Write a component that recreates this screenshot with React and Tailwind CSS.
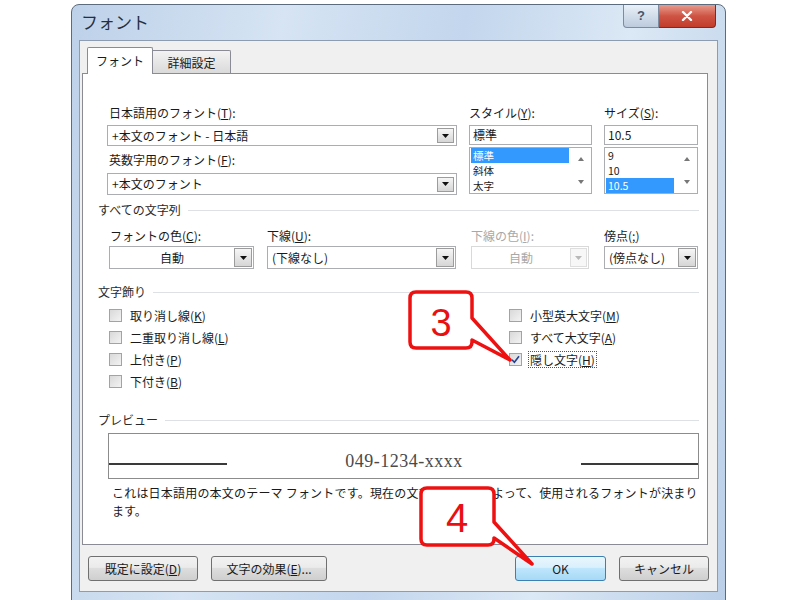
import React from 'react';

const JP = "font-['Noto_Sans_CJK_JP',sans-serif]";

function U({ children }) {
  return <span className="underline underline-offset-[1px]">{children}</span>;
}

function Label({ children, className = '' }) {
  return <div className={`text-[12px] leading-[14px] whitespace-nowrap ${className}`}>{children}</div>;
}

function Arrow({ disabled }) {
  return (
    <svg width="7" height="4" viewBox="0 0 7 4">
      <path d="M0 0h7L3.5 4z" fill={disabled ? '#b8b8b8' : '#111'} />
    </svg>
  );
}

function DropBtn({ disabled, className = '' }) {
  return (
    <div
      className={`flex items-center justify-center border ${
        disabled
          ? 'border-[#dedede] bg-[#f7f7f7]'
          : 'border-[#9c9c9c] bg-gradient-to-b from-[#f6f6f6] to-[#d6d6d6]'
      } ${className}`}
    >
      <Arrow disabled={disabled} />
    </div>
  );
}

function Combo({ className = '', text, center, disabled, btnClass = 'w-[17px] h-[15px] mr-[2px]' }) {
  return (
    <div
      className={`flex items-center bg-white border ${
        disabled ? 'border-[#d9d9d9] text-[#a8a8a8]' : 'border-[#abadb3]'
      } ${className}`}
    >
      <div className={`flex-1 text-[12px] leading-[14px] whitespace-nowrap ${center ? 'text-center' : 'pl-[4px]'}`}>
        {text}
      </div>
      <DropBtn disabled={disabled} className={btnClass} />
    </div>
  );
}

function ScrollArrows() {
  return (
    <div className="w-[20px] flex flex-col justify-between items-center py-[9px]">
      <svg width="6" height="4" viewBox="0 0 6 4"><path d="M0 4L3 0L6 4z" fill="#777" /></svg>
      <svg width="6" height="4" viewBox="0 0 6 4"><path d="M0 0h6L3 4z" fill="#777" /></svg>
    </div>
  );
}

function ListBox({ items, sel, className = '', selW }) {
  return (
    <div className={`flex border border-[#abadb3] bg-white ${className}`}>
      <div className="flex-1 pt-[0px] pl-[1px]">
        {items.map((it, i) => (
          <div
            key={i}
            className={`h-[15px] leading-[15px] text-[10.5px] pl-[2px] ${i === sel ? `bg-[#3399ff] text-white ${selW}` : ''}`}
          >
            {it}
          </div>
        ))}
      </div>
      <ScrollArrows />
    </div>
  );
}

function TextBox({ text, className = '' }) {
  return (
    <div className={`flex items-center bg-white border border-[#abadb3] pl-[3px] text-[12px] leading-[14px] ${className}`}>
      {text}
    </div>
  );
}

function Section({ title, className = '' }) {
  return (
    <div className={`flex items-center pl-[15px] pr-[8px] ${className}`}>
      <span className="text-[12px] leading-[14px] text-[#2a2a2a] whitespace-nowrap">{title}</span>
      <div className="flex-1 h-px bg-[#dde1e6] ml-[7px]" />
    </div>
  );
}

function CB({ label, checked, focus }) {
  return (
    <div className="flex items-center h-[22px]">
      <div className="w-[13px] h-[13px] border border-[#a3a3a3] bg-gradient-to-br from-[#d9d9d9] to-[#f3f3f3] flex items-center justify-center">
        {checked && (
          <svg width="9" height="9" viewBox="0 0 9 9">
            <path d="M1 4.8L3.4 7.3L8 1.2" stroke="#25408f" strokeWidth="1.6" fill="none" />
          </svg>
        )}
      </div>
      <span
        className={`ml-[6px] text-[12px] leading-[15px] px-[1px] whitespace-nowrap ${
          focus ? 'border border-dotted border-[#555]' : 'border border-transparent'
        }`}
      >
        {label}
      </span>
    </div>
  );
}

function Btn({ children, className = '', primary }) {
  return (
    <div
      className={`h-[25px] flex items-center justify-center rounded-[3px] border text-[12px] leading-[14px] ${
        primary
          ? 'border-[#3c7fb1] bg-[linear-gradient(#eaf6fd_0%,#d9f0fc_45%,#bee6fd_50%,#a7d9f5_100%)]'
          : 'border-[#707070] bg-[linear-gradient(#f2f2f2_0%,#ebebeb_45%,#dddddd_50%,#cfcfcf_100%)]'
      } ${className}`}
    >
      {children}
    </div>
  );
}

function TitleBar() {
  return (
    <div className="h-[35px] flex items-start">
      <div className="ml-[2px] mt-[7px] text-[17px] leading-[20px] text-[#26303c]">フォント</div>
      <div className="flex-1" />
      <div className="flex mr-[2px]">
        <div className="w-[36px] h-[23px] rounded-bl-[4px] border border-t-0 border-[#7d8ba0] bg-gradient-to-b from-[#e9f0f8] to-[#bccbdd] flex items-center justify-center text-[13px] leading-[14px] text-[#4a5566] font-['Liberation_Sans',sans-serif] font-bold">
          ?
        </div>
        <div className="w-[57px] h-[23px] rounded-br-[4px] border border-t-0 border-l-0 border-[#7a2c22] bg-gradient-to-b from-[#e69a8c] via-[#cf5444] to-[#c23b2a] flex items-center justify-center">
          <svg width="12" height="10" viewBox="0 0 12 10">
            <path d="M2 1L10 9M10 1L2 9" stroke="#fff" strokeWidth="2.4" strokeLinecap="round" />
          </svg>
        </div>
      </div>
    </div>
  );
}

function Callouts() {
  return (
    <svg className="absolute left-0 top-0 pointer-events-none" width="800" height="600" viewBox="0 0 800 600">
      <path
        d="M416,292 H466 Q472,292 472,298 V318 L510,360 L472,340 V342 Q472,348 466,348 H416 Q410,348 410,342 V298 Q410,292 416,292 Z"
        fill="#fff"
        stroke="#ee1111"
        strokeWidth="3.5"
        strokeLinejoin="round"
      />
      <text x="441" y="336" textAnchor="middle" fontSize="38" fill="#e81010" fontFamily="Liberation Sans, sans-serif">
        3
      </text>
      <path
        d="M427,488 H488 Q494,488 494,494 V522 L532,564 L494,538 V539 Q494,545 488,545 H427 Q421,545 421,539 V494 Q421,488 427,488 Z"
        fill="#fff"
        stroke="#ee1111"
        strokeWidth="3.5"
        strokeLinejoin="round"
      />
      <text x="457" y="532" textAnchor="middle" fontSize="40" fill="#e81010" fontFamily="Liberation Sans, sans-serif">
        4
      </text>
    </svg>
  );
}

function Panel() {
  return (
    <div className="relative w-[626px] h-[472px] -mt-px bg-white border border-[#898c95]">
      <div className="pt-[32px] flex">
        <div className="ml-[24px] w-[350px] flex flex-col">
          <Label className="ml-[2px]">日本語用のフォント(<U>T</U>):</Label>
          <Combo className="mt-[5px] h-[21px]" text="+本文のフォント - 日本語" />
          <Label className="ml-[2px] mt-[7px]">英数字用のフォント(<U>F</U>):</Label>
          <Combo className="mt-[6px] h-[22px]" text="+本文のフォント" />
        </div>
        <div className="ml-[12px] w-[123px] flex flex-col">
          <Label>スタイル(<U>Y</U>):</Label>
          <TextBox className="mt-[5px] h-[20px]" text="標準" />
          <ListBox className="mt-[2px] h-[47px]" items={['標準', '斜体', '太字']} sel={0} selW="w-[98px]" />
        </div>
        <div className="ml-[12px] w-[94px] flex flex-col">
          <Label>サイズ(<U>S</U>):</Label>
          <TextBox className="mt-[5px] h-[20px]" text="10.5" />
          <ListBox className="mt-[2px] h-[47px]" items={['9', '10', '10.5']} sel={2} selW="w-[68px]" />
        </div>
      </div>

      <Section className="mt-[8px]" title="すべての文字列" />
      <div className="flex mt-[12px]">
        <div className="ml-[26px] w-[145px] flex flex-col">
          <Label className="ml-[1px]">フォントの色(<U>C</U>):</Label>
          <Combo className="mt-[3px] h-[23px]" text="自動" center btnClass="w-[18px] h-[19px] mr-[1px]" />
        </div>
        <div className="ml-[13px] w-[189px] flex flex-col">
          <Label>下線(<U>U</U>):</Label>
          <Combo className="mt-[3px] h-[23px]" text="(下線なし)" btnClass="w-[18px] h-[19px] mr-[1px]" />
        </div>
        <div className="ml-[15px] w-[118px] flex flex-col">
          <Label className="text-[#a8a8a8]">下線の色(<U>I</U>):</Label>
          <Combo className="mt-[3px] h-[23px]" text="自動" center disabled btnClass="w-[17px] h-[19px] mr-[1px]" />
        </div>
        <div className="ml-[15px] w-[94px] flex flex-col">
          <Label>傍点(<U>;</U>)</Label>
          <Combo className="mt-[3px] h-[23px]" text="(傍点なし)" btnClass="w-[18px] h-[19px] mr-[1px]" />
        </div>
      </div>

      <Section className="mt-[16px]" title="文字飾り" />
      <div className="flex mt-[5px] ml-[26px]">
        <div className="w-[400px] flex flex-col">
          <CB label={<>取り消し線(<U>K</U>)</>} />
          <CB label={<>二重取り消し線(<U>L</U>)</>} />
          <CB label={<>上付き(<U>P</U>)</>} />
          <CB label={<>下付き(<U>B</U>)</>} />
        </div>
        <div className="flex flex-col">
          <CB label={<>小型英大文字(<U>M</U>)</>} />
          <CB label={<>すべて大文字(<U>A</U>)</>} />
          <CB label={<>隠し文字(<U>H</U>)</>} checked focus />
        </div>
      </div>

      <Section className="mt-[21px]" title="プレビュー" />
      <div className="ml-[25px] mt-[6px] w-[591px] h-[46px] border border-[#8c8c8c] flex items-center justify-between">
        <div className="w-[118px] h-[2px] bg-[#3a3a3a] mt-[16px]" />
        <div className="mt-[10px] text-[18px] leading-[20px] tracking-[0.5px] text-[#4a4a4a] font-['Liberation_Serif',serif]">
          049-1234-xxxx
        </div>
        <div className="w-[117px] h-[2px] bg-[#3a3a3a] mt-[16px]" />
      </div>
      <div className="ml-[29px] mt-[5px] text-[12px] leading-[17.5px] text-[#1a1a1a]">
        <div className="whitespace-nowrap tracking-[0.2px]">
          これは日本語用の本文のテーマ フォントです。現在の文書のテーマによって、使用されるフォントが決まり
        </div>
        <div className="whitespace-nowrap">ます。</div>
      </div>
    </div>
  );
}

export default function App() {
  return (
    <div className={`relative w-[800px] h-[600px] overflow-hidden bg-white pl-[71px] pt-[4px] ${JP} text-[#1a1a1a]`}>
      <div className="w-[655px] h-[620px] rounded-t-[8px] border border-[#5c6b7e] bg-[linear-gradient(100deg,#bdd1e9_0%,#d6e4f3_28%,#c3d6ed_52%,#dbe8f5_74%,#bacfe8_100%)] pl-[7px] pr-[7px] flex flex-col">
        <TitleBar />
        <div className="h-[552px] bg-[#f0f0f0] border border-[#8d9cb0] pt-[6px] pl-[2px]">
          <div className="flex items-end h-[27px] ml-[5px]">
            <div className="relative z-10 h-[27px] w-[66px] border border-b-0 border-[#898c95] bg-white rounded-t-[2px] flex items-center justify-center text-[12px] leading-[14px]">
              フォント
            </div>
            <div className="h-[24px] w-[78px] border border-l-0 border-b-0 border-[#898c95] rounded-tr-[2px] bg-gradient-to-b from-[#f3f3f3] to-[#d9d9d9] flex items-center justify-center text-[12px] leading-[14px]">
              詳細設定
            </div>
          </div>
          <Panel />
          <div className="flex mt-[11px] ml-[6px]">
            <Btn className="w-[110px]">既定に設定(<U>D</U>)</Btn>
            <Btn className="w-[116px] ml-[13px]">文字の効果(<U>E</U>)...</Btn>
            <Btn className="w-[91px] ml-[188px]" primary>OK</Btn>
            <Btn className="w-[90px] ml-[13px]">キャンセル</Btn>
          </div>
        </div>
      </div>
      <Callouts />
    </div>
  );
}
